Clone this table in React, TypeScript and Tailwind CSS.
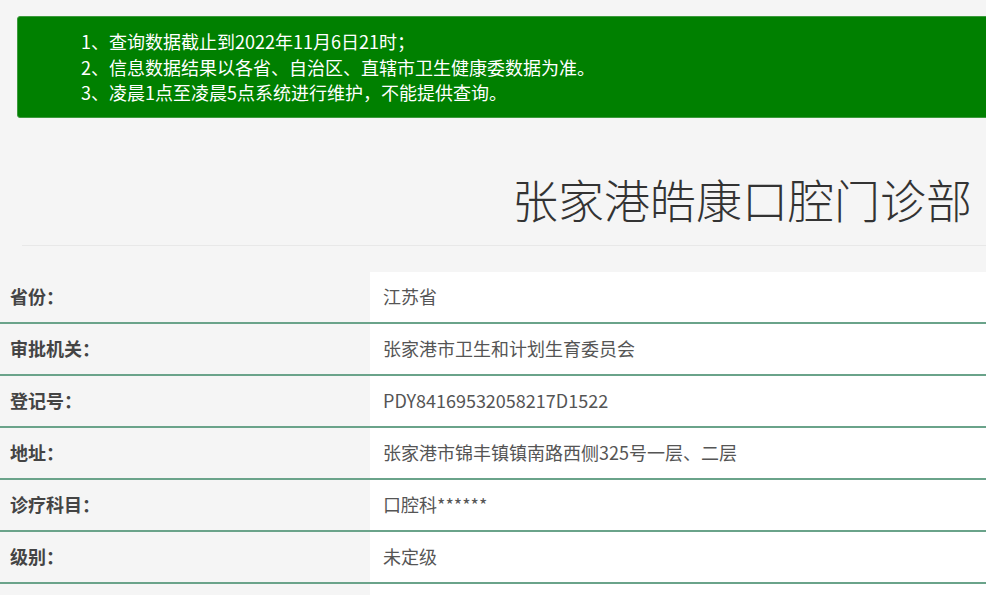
import React from 'react';

const rows: [string, string][] = [
  ['省份：', '江苏省'],
  ['审批机关：', '张家港市卫生和计划生育委员会'],
  ['登记号：', 'PDY84169532058217D1522'],
  ['地址：', '张家港市锦丰镇镇南路西侧325号一层、二层'],
  ['诊疗科目：', '口腔科******'],
  ['级别：', '未定级'],
  ['', ''],
];

const App: React.FC = () => {
  return (
    <div
      className="min-h-screen w-full overflow-hidden bg-[#f5f5f5] text-[#333]"
      style={{ fontFamily: '"Noto Sans CJK SC", "Noto Sans", sans-serif' }}
    >
      {/* Notice */}
      <div className="pt-[16px] pl-[17px] -mr-[20px]">
        <div className="rounded-[3px] border border-[#3d9a3d] bg-[#008000] pl-[63px] pt-[12px] pb-[11px] text-[18px] leading-[25.5px] text-white">
          <p>1、查询数据截止到2022年11月6日21时；</p>
          <p>2、信息数据结果以各省、自治区、直辖市卫生健康委数据为准。</p>
          <p>3、凌晨1点至凌晨5点系统进行维护，不能提供查询。</p>
        </div>
      </div>

      {/* Title */}
      <h1 className="mt-[53px] pr-[14px] text-right text-[46px] font-light leading-[55px] text-[#333]">
        张家港皓康口腔门诊部
      </h1>
      <div className="mt-[19px] ml-[22px] h-px bg-[#e8e8e8]" />

      {/* Info table */}
      <div className="mt-[26px]">
        {rows.map(([label, value], i) => (
          <div key={i} className="flex h-[52px] border-b-2 border-[#6aa38a]">
            <div className="flex w-[370px] shrink-0 items-center bg-[#f5f5f5] pl-[10px] text-[18px] font-bold text-[#444]">
              {label}
            </div>
            <div className="flex flex-1 items-center bg-white pl-[13px] text-[18px] text-[#555]">
              {value}
            </div>
          </div>
        ))}
      </div>
    </div>
  );
};

export default App;
